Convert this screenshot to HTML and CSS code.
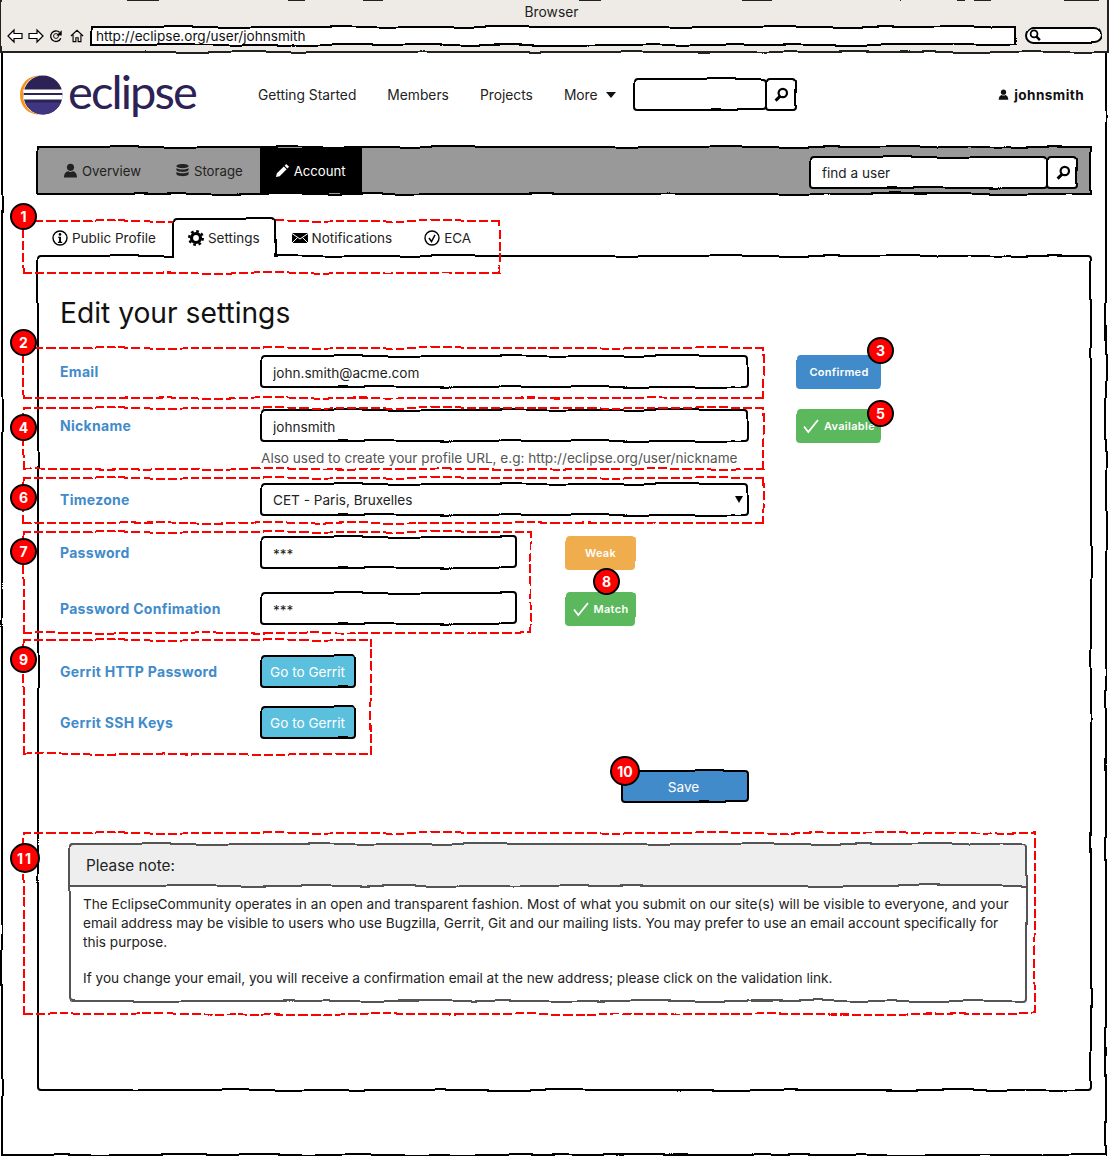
FILE: index.html
```html
<!DOCTYPE html>
<html lang="en">

<head>
    <meta charset="UTF-8">
    <meta name="viewport" content="width=device-width, initial-scale=1.0">
    <title>Edit your settings</title>
    <link rel="stylesheet" href="styles.css">
</head>

<body>
    <!-- shared sketch filter and icons -->
    <svg class="defs" aria-hidden="true">
        <defs>
            <filter id="rough" x="-20%" y="-20%" width="140%" height="140%" color-interpolation-filters="sRGB">
                <feTurbulence type="fractalNoise" baseFrequency="0.018" numOctaves="2" seed="4" />
                <feDisplacementMap in="SourceGraphic" scale="5" xChannelSelector="R" yChannelSelector="G" />
            </filter>
            <symbol id="i-user" viewBox="0 0 16 16">
                <circle cx="8" cy="4.600" r="3.800" />
                <path d="M1 15.500c0-4.500 2.400-6.500 4.500-6.800.7.500 1.500.8 2.500.8s1.800-.3 2.500-.8c2.100.3 4.500 2.300 4.500 6.800z" />
            </symbol>
            <symbol id="i-storage" viewBox="0 0 16 16">
                <path d="M8 1c3.600 0 6.500 1 6.500 2.300S11.600 5.600 8 5.600 1.500 4.600 1.500 3.300 4.400 1 8 1z" />
                <path d="M1.500 5.200v2c0 1.300 2.900 2.300 6.500 2.300s6.500-1 6.500-2.300v-2c-1 1-3.500 1.600-6.500 1.600S2.500 6.200 1.500 5.200z" />
                <path d="M1.500 9.400v2.300c0 1.300 2.900 2.300 6.500 2.300s6.500-1 6.500-2.300V9.400c-1 1-3.500 1.600-6.500 1.600s-5.500-.6-6.500-1.600z" />
            </symbol>
            <symbol id="i-pencil" viewBox="0 0 16 16">
                <path d="M12 1l3 3-1.800 1.800-3-3zM9.400 3.600l3 3-7.400 7.400-4 1 1-4z" />
            </symbol>
            <symbol id="i-info" viewBox="0 0 16 16">
                <circle cx="8" cy="8" r="7" fill="none" stroke="#000" stroke-width="1.400" />
                <circle cx="8" cy="4.400" r="1.300" />
                <path d="M6.200 6.800H9v5h1.200v1.300H5.900v-1.300h1.200V8.100h-.9z" />
            </symbol>
            <symbol id="i-cog" viewBox="0 0 16 16">
                <circle cx="8" cy="8" r="4.500" fill="none" stroke="#000" stroke-width="3.200" />
                <circle cx="8" cy="8" r="6.800" fill="none" stroke="#000" stroke-width="2.400" stroke-dasharray="2.700 2.640" />
            </symbol>
            <symbol id="i-mail" viewBox="0 0 16 16">
                <path d="M0 3h16v10H0z" />
                <path d="M0 3.500l8 5.500 8-5.500M0 13l5.500-5.500M16 13l-5.500-5.500" fill="none" stroke="#fff" stroke-width="1" />
            </symbol>
            <symbol id="i-check-circle" viewBox="0 0 16 16">
                <circle cx="8" cy="8" r="7" fill="none" stroke="#000" stroke-width="1.400" />
                <path d="M5 8l2.500 3.500L11 4.800" fill="none" stroke="#000" stroke-width="1.500" />
            </symbol>
            <symbol id="i-check" viewBox="0 0 16 16">
                <path d="M1 8.500l4.300 5.500L15 2" fill="none" stroke="#fff" stroke-width="1.800" />
            </symbol>
            <symbol id="i-search" viewBox="0 0 16 16">
                <circle cx="9.800" cy="6" r="4.200" fill="none" stroke="#000" stroke-width="2.200" />
                <path d="M7 9.200l-4.400 4.400" fill="none" stroke="#000" stroke-width="3" />
            </symbol>
            <symbol id="i-back" viewBox="0 0 16 16">
                <path d="M1 8l6-6v3.500h8v5H7V14z" fill="#fff" stroke="#000" stroke-width="1.200" />
            </symbol>
            <symbol id="i-forward" viewBox="0 0 16 16">
                <path d="M15 8L9 2v3.500H1v5h8V14z" fill="#fff" stroke="#000" stroke-width="1.200" />
            </symbol>
            <symbol id="i-reload" viewBox="0 0 16 16">
                <path d="M13.500 10.500A6 6 0 1 1 12 3.800" fill="none" stroke="#000" stroke-width="1.500" />
                <path d="M14.500 1.500v6h-6z" />
                <circle cx="8" cy="8" r="2.800" fill="none" stroke="#000" stroke-width="1" />
            </symbol>
            <symbol id="i-home" viewBox="0 0 16 16">
                <path d="M1 8l7-6.500L15 8M3.500 6.500V14.500h3.200V10h2.600v4.500h3.200V6.500" fill="none" stroke="#000" stroke-width="1.300" />
            </symbol>
        </defs>
    </svg>

    <div class="window sketch">
        <div class="browser-bar sketch">
            <div class="browser-title">Browser</div>
            <div class="browser-tools">
                <svg class="tool-icon"><use href="#i-back" /></svg>
                <svg class="tool-icon"><use href="#i-forward" /></svg>
                <svg class="tool-icon tool-small"><use href="#i-reload" /></svg>
                <svg class="tool-icon tool-small"><use href="#i-home" /></svg>
                <div class="address sketch">http://eclipse.org/user/johnsmith</div>
                <div class="browser-search sketch">
                    <svg class="pill-icon"><use href="#i-search" /></svg>
                </div>
            </div>
        </div>

        <header class="site-header">
            <div class="logo">
                <svg class="logo-mark" viewBox="0 0 46 46">
                    <path d="M23 3.500C11 2.500 2 11 2 23s9 20.500 21 19.500C13 42 5 34 5 23S13 4 23 3.500z" fill="#f7941e" />
                    <circle cx="25" cy="23" r="19.500" fill="#2c2255" />
                    <path d="M7 30.500h36a19.500 19.500 0 0 1-36 0z" fill="#3f3580" />
                    <path d="M5.500 17.500h39v3.500h-39zM5.500 23h39v4.500h-39z" fill="#fff" />
                </svg>
                <span class="logo-text">eclipse</span>
            </div>
            <nav class="site-nav">
                <a href="#">Getting Started</a>
                <a href="#">Members</a>
                <a href="#">Projects</a>
                <a href="#" class="more">More <span class="caret"></span></a>
            </nav>
            <div class="search header-search">
                <div class="search-box sketch"><input type="text" aria-label="Search"></div>
                <div class="search-btn sketch"><svg class="icon"><use href="#i-search" /></svg></div>
            </div>
            <div class="user-name">
                <svg class="icon icon-user"><use href="#i-user" /></svg>
                johnsmith
            </div>
        </header>

        <div class="subnav sketch">
            <a href="#" class="subnav-item"><svg class="icon"><use href="#i-user" /></svg>Overview</a>
            <a href="#" class="subnav-item"><svg class="icon"><use href="#i-storage" /></svg>Storage</a>
            <a href="#" class="subnav-item active"><svg class="icon"><use href="#i-pencil" /></svg>Account</a>
            <div class="search user-search">
                <div class="search-box sketch"><input type="text" value="find a user" aria-label="Find a user"></div>
                <div class="search-btn sketch"><svg class="icon"><use href="#i-search" /></svg></div>
            </div>
        </div>

        <div class="tabs">
            <a href="#" class="tab"><svg class="icon"><use href="#i-info" /></svg>Public Profile</a>
            <a href="#" class="tab active sketch"><svg class="icon"><use href="#i-cog" /></svg>Settings</a>
            <a href="#" class="tab tab-mail"><svg class="icon"><use href="#i-mail" /></svg>Notifications</a>
            <a href="#" class="tab"><svg class="icon"><use href="#i-check-circle" /></svg>ECA</a>
        </div>

        <main class="panel sketch">
            <h1>Edit your settings</h1>

            <form class="settings">
                <div class="row row-email">
                    <label for="email">Email</label>
                    <div class="field sketch"><input type="text" id="email" value="john.smith@acme.com"></div>
                    <span class="status status-blue sketch">Confirmed</span>
                </div>

                <div class="row row-nick">
                    <label for="nick">Nickname</label>
                    <div class="field sketch"><input type="text" id="nick" value="johnsmith"></div>
                    <span class="status status-green sketch"><svg class="check"><use href="#i-check" /></svg>Available</span>
                </div>
                <p class="help">Also used to create your profile URL, e.g: http://eclipse.org/user/nickname</p>

                <div class="row row-zone">
                    <label for="zone">Timezone</label>
                    <div class="field sketch">
                        <select id="zone">
                            <option>CET - Paris, Bruxelles</option>
                        </select>
                        <span class="select-caret"></span>
                    </div>
                </div>

                <div class="row row-pass">
                    <label for="pass">Password</label>
                    <div class="field field-short sketch"><input type="text" id="pass" value="***"></div>
                    <span class="status status-orange status-short sketch">Weak</span>
                </div>

                <div class="row row-confirm">
                    <label for="confirm">Password Confimation</label>
                    <div class="field field-short sketch"><input type="text" id="confirm" value="***"></div>
                    <span class="status status-green status-short sketch"><svg class="check"><use href="#i-check" /></svg>Match</span>
                </div>

                <div class="row row-gerrit">
                    <label>Gerrit HTTP Password</label>
                    <a href="#" class="btn btn-info sketch">Go to Gerrit</a>
                </div>

                <div class="row row-ssh">
                    <label>Gerrit SSH Keys</label>
                    <a href="#" class="btn btn-info sketch">Go to Gerrit</a>
                </div>

                <div class="actions">
                    <button type="button" class="btn btn-save sketch">Save</button>
                </div>
            </form>

            <section class="note sketch">
                <h2 class="sketch">Please note:</h2>
                <div class="note-body">
                    <p>The EclipseCommunity operates in an open and transparent fashion. Most of what you submit on our site(s) will be visible to everyone, and your email address may be visible to users who use Bugzilla, Gerrit, Git and our mailing lists. You may prefer to use an email account specifically for this purpose.</p>
                    <p>If you change your email, you will receive a confirmation email at the new address; please click on the validation link.</p>
                </div>
            </section>
        </main>

        <!-- review annotations, laid over the wireframe -->
        <div class="zone zone-1"></div>
        <div class="zone zone-2"></div>
        <div class="zone zone-4"></div>
        <div class="zone zone-6"></div>
        <div class="zone zone-7"></div>
        <div class="zone zone-9"></div>
        <div class="zone zone-11"></div>

        <span class="pin pin-1">1</span>
        <span class="pin pin-2">2</span>
        <span class="pin pin-3">3</span>
        <span class="pin pin-4">4</span>
        <span class="pin pin-5">5</span>
        <span class="pin pin-6">6</span>
        <span class="pin pin-7">7</span>
        <span class="pin pin-8">8</span>
        <span class="pin pin-9">9</span>
        <span class="pin pin-10">10</span>
        <span class="pin pin-11">11</span>
    </div>
</body>

</html>
```

FILE: styles.css
```css
* {
    box-sizing: border-box;
}

body {
    margin: 0;
    font-family: Inter, "Noto Sans", sans-serif;
    font-size: 13.6px;
    color: #222;
    background-color: #fff;
}

a {
    color: inherit;
    text-decoration: none;
}

.defs {
    position: absolute;
    width: 0;
    height: 0;
}

/* hand drawn outline, sits behind the content of the element */
.sketch {
    position: relative;
    z-index: 0;
}

.sketch::before {
    content: "";
    position: absolute;
    inset: 0;
    z-index: -1;
    border: 2px solid #000;
    border-radius: 4px;
    background-color: #fff;
    filter: url(#rough);
}

.icon {
    width: 16px;
    height: 16px;
    flex: none;
    fill: currentColor;
}

/* window */
.window {
    width: 1109px;
    height: 1156px;
    overflow: hidden;
}

.window::before {
    inset: -1px 2px 0 1px;
    border-radius: 0;
}

.browser-bar {
    height: 53px;
    padding: 4px 7px 0 7px;
}

.browser-bar::before {
    inset: -2px 0 0 0;
    background-color: #eeebe6;
    border-color: #222;
    border-radius: 0;
}

.browser-title {
    height: 17px;
    padding-right: 6px;
    line-height: 17px;
    text-align: center;
    font-size: 13.8px;
}

.browser-tools {
    display: flex;
    align-items: center;
    height: 27px;
    margin-top: 1px;
}

.tool-icon {
    width: 16px;
    height: 16px;
    margin-right: 5px;
}

.tool-small {
    width: 14px;
    height: 14px;
    margin-right: 7px;
}

.address {
    width: 925px;
    height: 20px;
    padding-left: 5px;
    line-height: 20px;
    color: #111;
}

.address::before {
    border-radius: 0;
}

.browser-search {
    width: 76px;
    height: 17px;
    margin-left: 10px;
}

.browser-search::before {
    border-radius: 9px;
}

.pill-icon {
    display: block;
    width: 13px;
    height: 13px;
    margin: 2px 0 0 3px;
    transform: scaleX(-1);
}

/* site header */
.site-header {
    display: flex;
    align-items: center;
    height: 83px;
    padding-left: 18px;
}

.logo {
    display: flex;
    align-items: center;
    width: 240px;
}

.logo-mark {
    width: 46px;
    height: 46px;
    flex: none;
}

.logo-text {
    margin: -8px 0 0 4px;
    font-family: Lato, "Open Sans", sans-serif;
    font-weight: 400;
    font-size: 47px;
    line-height: 46px;
    letter-spacing: -1.900px;
    color: #2c2255;
}

.site-nav {
    display: flex;
    gap: 31px;
    align-items: center;
    font-size: 13.8px;
}

.more {
    display: flex;
    align-items: center;
}

.caret {
    width: 0;
    height: 0;
    margin-left: 8px;
    border-style: solid;
    border-width: 6px 5px 0;
    border-color: #111 transparent transparent;
}

.search {
    display: flex;
}

.header-search {
    margin-left: 18px;
}

.search-box {
    width: 132px;
    height: 33px;
}

.search-box input {
    width: 100%;
    height: 100%;
    padding: 0 12px;
    border: none;
    outline: none;
    background: transparent;
    font: inherit;
    color: #222;
}

.search-btn {
    display: flex;
    align-items: center;
    justify-content: center;
    width: 31px;
    height: 33px;
    color: #000;
}

.user-name {
    display: flex;
    align-items: center;
    gap: 5px;
    margin-left: auto;
    margin-right: 25px;
    font-weight: 700;
    letter-spacing: 0.4px;
    color: #111;
}

.icon-user {
    width: 11px;
    height: 11px;
}

/* account menu */
.subnav {
    display: flex;
    align-items: stretch;
    width: 1055px;
    height: 49px;
    margin: 10px 0 0 37px;
    padding: 2px 14px 2px 9px;
}

.subnav::before {
    background-color: #999;
    border-radius: 0;
}

.subnav-item {
    display: flex;
    align-items: center;
    gap: 4px;
    padding: 0 17px;
    font-size: 13.2px;
    color: #222;
}

.subnav-item .icon {
    width: 15px;
    height: 15px;
}

.subnav-item.active {
    padding: 0 16px 0 15px;
    background-color: #000;
    color: #fff;
}

.user-search {
    margin: 8px 0 0 auto;
    align-self: flex-start;
}

.user-search .search-box {
    width: 237px;
}

/* tabs */
.tabs {
    position: relative;
    z-index: 1;
    display: flex;
    height: 38px;
    margin: 23px 0 0 37px;
    font-size: 13.5px;
}

.tab {
    display: flex;
    align-items: center;
    gap: 4px;
    height: 40px;
    padding: 0 15px;
}

.tab:first-child {
    padding-right: 17px;
}

.tab.active {
    padding-right: 16px;
}

.tab-mail {
    padding: 0 17px 0 16px;
}

.tab.active::before {
    border-bottom: none;
    border-radius: 4px 4px 0 0;
}

.tab .icon {
    color: #000;
}

/* main panel */
.panel {
    width: 1055px;
    height: 836px;
    margin: -1px 0 0 37px;
    padding: 40px 0 0 23px;
}

h1 {
    margin: 0 0 24px;
    height: 36px;
    line-height: 36px;
    font-size: 28.2px;
    font-weight: 400;
    color: #111;
}

.row {
    display: flex;
    align-items: center;
    gap: 49px;
    height: 33px;
}

.row label {
    width: 152px;
    font-size: 14px;
    font-weight: 700;
    letter-spacing: 0.3px;
    color: #428bca;
    white-space: nowrap;
}

.row-nick {
    margin-top: 21px;
}

.row-zone {
    margin-top: 16px;
}

.row-pass {
    margin-top: 20px;
}

.row-confirm {
    margin-top: 23px;
}

.row-gerrit {
    margin-top: 30px;
}

.row-ssh {
    margin-top: 18px;
}

.field {
    width: 487px;
    height: 33px;
}

.field-short {
    width: 256px;
}

.field input,
.field select {
    display: block;
    width: 100%;
    height: 100%;
    padding: 0 12px;
    border: none;
    outline: none;
    background: transparent;
    font: inherit;
    color: #222;
    appearance: none;
}

.field input {
    padding-top: 2px;
}

.select-caret {
    position: absolute;
    top: 13px;
    right: 5px;
    width: 0;
    height: 0;
    border-style: solid;
    border-width: 7px 4px 0;
    border-color: #000 transparent transparent;
}

.help {
    margin: 7px 0 0 201px;
    height: 18px;
    line-height: 18px;
    font-size: 13.6px;
    color: #555;
}

.status {
    display: flex;
    align-items: center;
    justify-content: center;
    gap: 5px;
    width: 84px;
    height: 34px;
    font-size: 11px;
    font-weight: 600;
    letter-spacing: 0.3px;
    color: #fff;
}

.status::before {
    border: none;
}

.status-blue::before {
    background-color: #428bca;
}

.status-green::before {
    background-color: #5cb85c;
}

.status-orange::before {
    background-color: #f0ad4e;
}

.status-short {
    width: 69px;
}

.check {
    width: 16px;
    height: 16px;
    flex: none;
}

.btn {
    display: flex;
    align-items: center;
    justify-content: center;
    border: none;
    background: transparent;
    font: inherit;
    color: #fff;
}

.btn-info {
    width: 95px;
    height: 33px;
    padding-right: 2px;
}

.btn-info::before {
    background-color: #5bc0de;
}

.actions {
    display: flex;
    justify-content: flex-end;
    width: 688px;
    margin-top: 31px;
}

.btn-save {
    width: 126px;
    height: 33px;
    padding: 0 3px 0 0;
}

.btn-save::before {
    background-color: #428bca;
}

/* please note box */
.note {
    width: 958px;
    height: 159px;
    margin: 40px 0 0 9px;
}

.note::before {
    border-color: #555;
}

.note h2 {
    height: 44px;
    margin: 0;
    padding-left: 17px;
    line-height: 46px;
    font-size: 15.3px;
    font-weight: 400;
    color: #222;
}

.note h2::before {
    background-color: #eee;
    border-color: #555;
    border-radius: 4px 4px 0 0;
}

.note-body {
    padding: 8px 14px 0;
    font-size: 13.62px;
    line-height: 19px;
}

.note-body p {
    margin: 0 0 17px;
}

/* annotations */
.zone {
    position: absolute;
    background-image:
        repeating-linear-gradient(90deg, #f00 0 9px, transparent 9px 12px),
        repeating-linear-gradient(90deg, #f00 0 9px, transparent 9px 12px),
        repeating-linear-gradient(0deg, #f00 0 9px, transparent 9px 12px),
        repeating-linear-gradient(0deg, #f00 0 9px, transparent 9px 12px);
    background-size: 100% 2px, 100% 2px, 2px 100%, 2px 100%;
    background-position: top, bottom, left, right;
    background-repeat: no-repeat;
    filter: url(#rough);
    pointer-events: none;
}

.zone-1 { left: 23px; top: 220px; width: 477px; height: 54px; }
.zone-2 { left: 23px; top: 347px; width: 741px; height: 52px; }
.zone-4 { left: 23px; top: 407px; width: 741px; height: 63px; }
.zone-6 { left: 23px; top: 477px; width: 741px; height: 47px; }
.zone-7 { left: 23px; top: 531px; width: 509px; height: 103px; }
.zone-9 { left: 23px; top: 639px; width: 349px; height: 116px; }
.zone-11 { left: 23px; top: 832px; width: 1013px; height: 183px; }

.pin {
    position: absolute;
    display: flex;
    align-items: center;
    justify-content: center;
    width: 27px;
    height: 27px;
    border: 2px solid #000;
    border-radius: 50%;
    background-color: #f00;
    color: #fff;
    font-size: 14px;
    font-weight: 700;
}

.pin-1 { left: 10px; top: 203px; }
.pin-2 { left: 10px; top: 329px; }
.pin-3 { left: 867px; top: 337px; }
.pin-4 { left: 10px; top: 414px; }
.pin-5 { left: 867px; top: 400px; }
.pin-6 { left: 10px; top: 484px; }
.pin-7 { left: 10px; top: 538px; }
.pin-8 { left: 593px; top: 568px; }
.pin-9 { left: 10px; top: 646px; }
.pin-10 { left: 610px; top: 756px; width: 30px; height: 30px; }
.pin-11 { left: 10px; top: 843px; width: 30px; height: 30px; letter-spacing: 2px; }
```
